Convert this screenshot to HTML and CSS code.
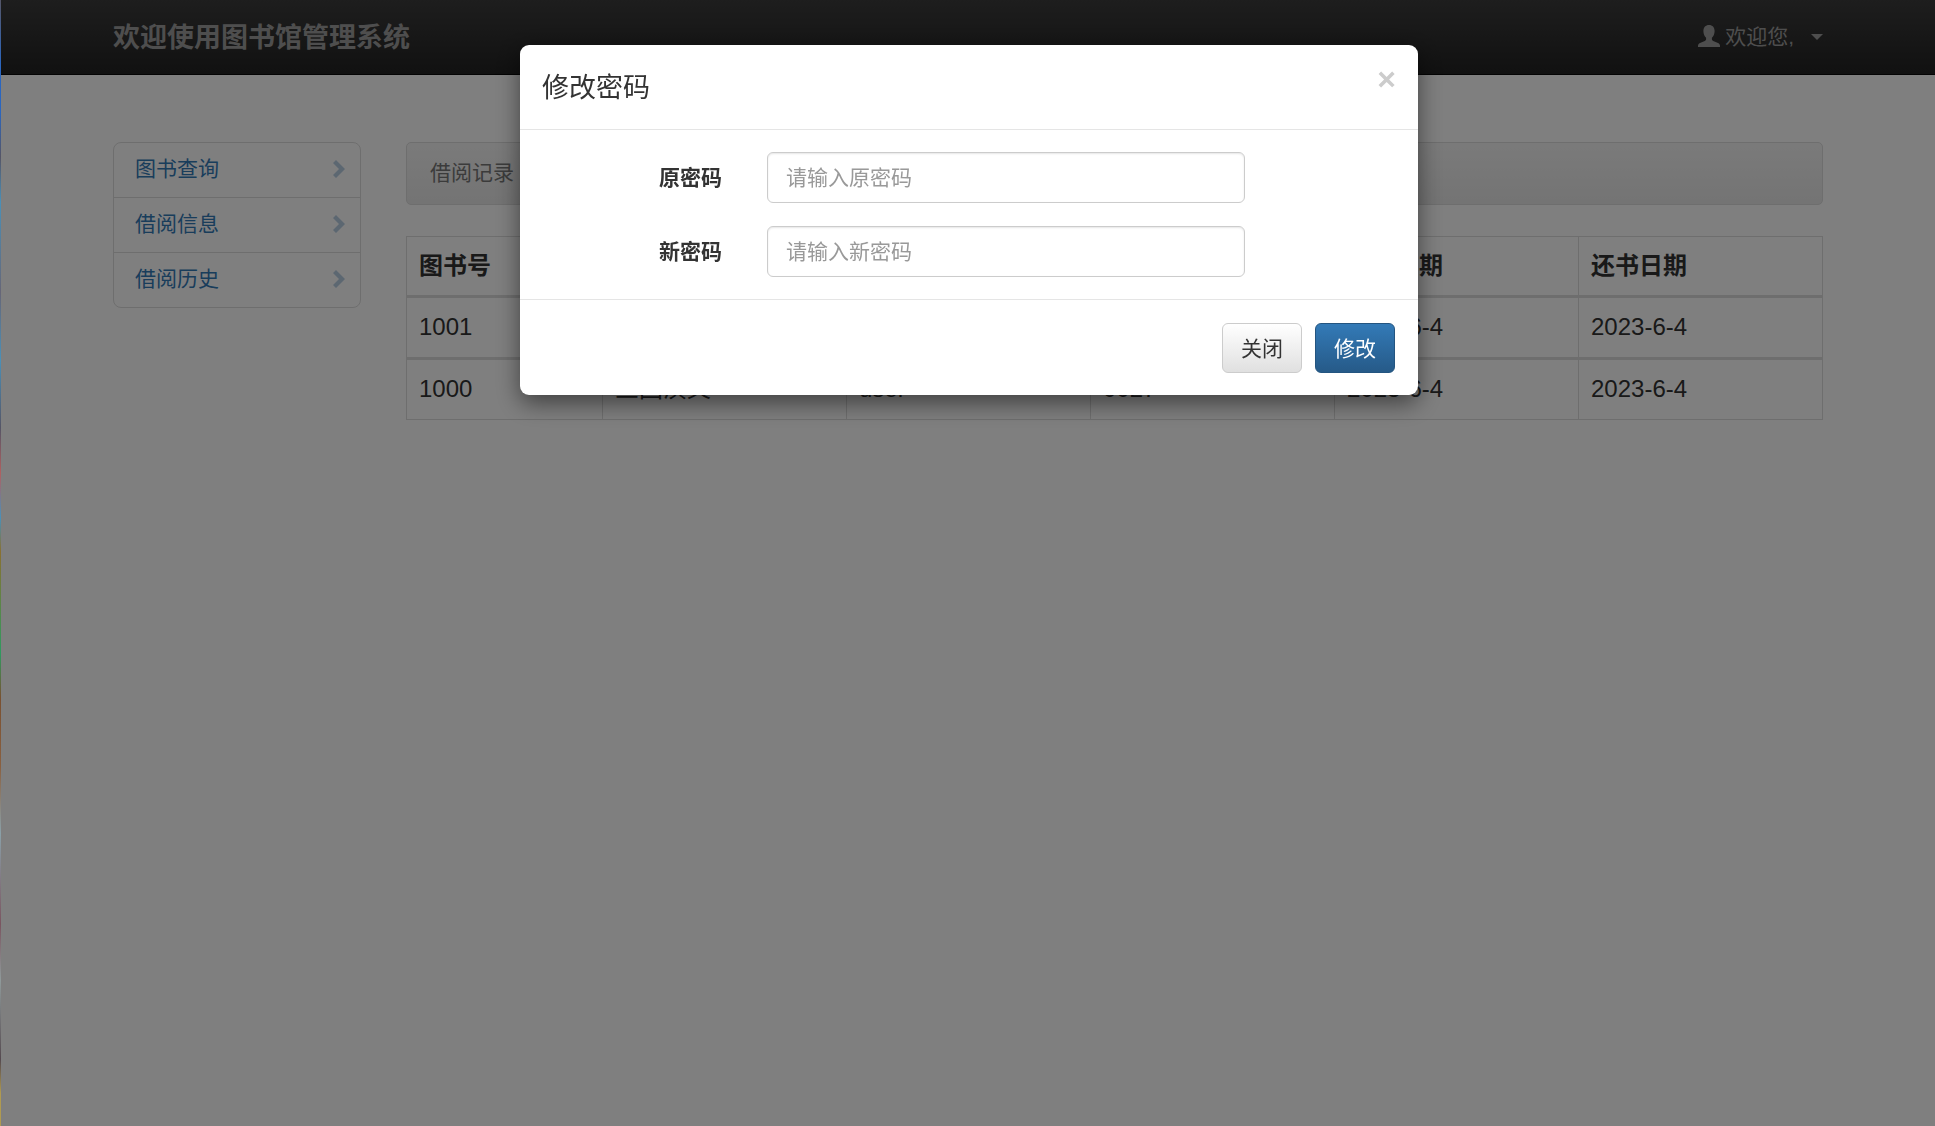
FILE: index.html
```html
<!DOCTYPE html>
<html lang="zh-CN">
<head>
  <meta charset="UTF-8">
  <meta name="viewport" content="width=device-width, initial-scale=1.0">
  <title>图书馆管理系统</title>
  <link rel="stylesheet" href="styles.css">
</head>
<body>

  <nav class="navbar">
    <div class="container navbar-inner">
      <a class="navbar-brand" href="#">欢迎使用图书馆管理系统</a>
      <a class="navbar-user" href="#">
        <svg class="icon-user" viewBox="0 0 22 22" aria-hidden="true"><path d="M11 0C7.600 0 5.400 2.300 5.400 6c0 3 1.100 5.300 2.700 6.700v1.600c0 .8-.5 1.200-1.300 1.600L2 18.100C.7 18.700 0 19.600 0 21v1h22v-1c0-1.400-.7-2.300-2-2.900l-4.800-2.200c-.8-.4-1.300-.8-1.300-1.600v-1.600C15.500 11.300 16.600 9 16.600 6c0-3.700-2.200-6-5.600-6z"/></svg>
        <span>欢迎您,</span>
        <span class="caret"></span>
      </a>
    </div>
  </nav>

  <div class="container main">
    <div class="list-group">
      <a class="list-group-item" href="#">图书查询
        <svg class="icon-chevron" viewBox="0 0 14 20" aria-hidden="true"><path d="M4 1l9 9-9 9-3-3 6-6-6-6z"/></svg>
      </a>
      <a class="list-group-item" href="#">借阅信息
        <svg class="icon-chevron" viewBox="0 0 14 20" aria-hidden="true"><path d="M4 1l9 9-9 9-3-3 6-6-6-6z"/></svg>
      </a>
      <a class="list-group-item" href="#">借阅历史
        <svg class="icon-chevron" viewBox="0 0 14 20" aria-hidden="true"><path d="M4 1l9 9-9 9-3-3 6-6-6-6z"/></svg>
      </a>
    </div>

    <div class="content">
      <div class="panel-heading">借阅记录</div>
      <table class="table">
        <thead>
          <tr>
            <th class="col-id">图书号</th>
            <th>图书名称</th>
            <th>用户名</th>
            <th>编号</th>
            <th>借书日期</th>
            <th>还书日期</th>
          </tr>
        </thead>
        <tbody>
          <tr>
            <td>1001</td>
            <td>西游记</td>
            <td>user</td>
            <td>0027</td>
            <td>2023-6-4</td>
            <td>2023-6-4</td>
          </tr>
        </tbody>
        <tbody>
          <tr>
            <td>1000</td>
            <td>三国演义</td>
            <td>user</td>
            <td>0027</td>
            <td>2023-6-4</td>
            <td>2023-6-4</td>
          </tr>
        </tbody>
      </table>
    </div>
  </div>

  <!-- 修改密码 -->
  <div class="modal-backdrop">
    <form class="modal" role="dialog" aria-labelledby="modalTitle">
      <div class="modal-header">
        <h4 class="modal-title" id="modalTitle">修改密码</h4>
        <button type="button" class="close" aria-label="关闭">&times;</button>
      </div>
      <div class="modal-body">
        <div class="form-group">
          <label for="oldPassword">原密码</label>
          <input type="password" id="oldPassword" placeholder="请输入原密码">
        </div>
        <div class="form-group">
          <label for="newPassword">新密码</label>
          <input type="password" id="newPassword" placeholder="请输入新密码">
        </div>
      </div>
      <div class="modal-footer">
        <button type="button" class="btn btn-default">关闭</button>
        <button type="submit" class="btn btn-primary">修改</button>
      </div>
    </form>
  </div>

</body>
</html>
```

FILE: styles.css
```css
* {
  box-sizing: border-box;
}

body {
  font-family: "Liberation Sans", "Noto Sans CJK SC", sans-serif;
  font-size: 21px;
  line-height: 30px;
  color: #333;
  background-color: #fff;
  margin: 0;
  min-height: 100vh;
  /* 左侧彩色细边 */
  border-left: 1px solid;
  border-image: linear-gradient(to bottom, #556 0%, #2a66c0 6%, #2a66c0 10%, #556 14%, #4a90b8 18%, #667 26%, #4a90b8 32%, #556 38%, #b06060 42%, #4a90b8 46%, #8a7030 49%, #2f9a60 58%, #7a5030 62%, #8a6040 68%, #8aa0a8 74%, #7a5560 82%, #8f9a9a 87%, #554a50 94%, #b09a50 97%, #b09a50 100%) 1;
}

a {
  text-decoration: none;
}

.container {
  width: 100%;
  max-width: 1754px;
  margin: 0 auto;
  padding: 0 22px;
}

/* 导航栏 */
.navbar {
  background: linear-gradient(to bottom, #3c3c3c 0%, #222 100%);
  border-bottom: 1px solid #080808;
}

.navbar-inner {
  display: flex;
  align-items: center;
  justify-content: space-between;
  height: 74px;
}

.navbar-brand {
  font-size: 27px;
  font-weight: bold;
  padding-top: 2px;
  color: #9d9d9d;
}

.navbar-user {
  display: flex;
  align-items: center;
  gap: 5px;
  color: #9d9d9d;
}

.icon-user {
  width: 22px;
  height: 22px;
  margin-bottom: 3px;
  fill: #9d9d9d;
}

.caret {
  margin-left: 12px;
  border-top: 6px solid #9d9d9d;
  border-left: 6px solid transparent;
  border-right: 6px solid transparent;
}

/* 主体 */
.main {
  display: flex;
  align-items: flex-start;
  gap: 45px;
  margin-top: 67px;
}

.list-group {
  width: 248px;
  flex-shrink: 0;
  border: 1px solid #ddd;
  border-radius: 8px;
}

.list-group-item {
  display: flex;
  align-items: center;
  justify-content: space-between;
  padding: 11px 14px 13px 21px;
  color: #337ab7;
}

.list-group-item + .list-group-item {
  border-top: 1px solid #ddd;
}

.icon-chevron {
  width: 14px;
  height: 20px;
  fill: #b8cfe3;
}

.content {
  flex: 1;
}

.panel-heading {
  padding: 15px 23px 16px;
  color: #777;
  background: linear-gradient(to bottom, #f5f5f5 0%, #e8e8e8 100%);
  border: 1px solid #dcdcdc;
  border-radius: 5px;
  margin-bottom: 31px;
}

.table {
  width: 100%;
  table-layout: fixed;
  border-collapse: collapse;
  font-size: 24px;
  line-height: 34px;
}

.table th,
.table td {
  padding: 12px 12px 13px;
  border: 1px solid #ddd;
  text-align: left;
}

.table th {
  padding: 12px;
}

.table .col-id {
  width: 196px;
}

.table tbody {
  border-top: 3px solid #ddd;
}

/* 弹窗 */
.modal-backdrop {
  position: fixed;
  inset: 0 0 0 1px;
  padding: 45px 0 0 2px;
  background-color: rgba(0, 0, 0, 0.5);
}

.modal {
  width: 100%;
  max-width: 898px;
  margin: 0 auto;
  background-color: #fff;
  border-radius: 9px;
  box-shadow: 0 8px 23px rgba(0, 0, 0, 0.5);
}

.modal-header {
  display: flex;
  align-items: flex-start;
  justify-content: space-between;
  padding: 22px 22px 21px;
  border-bottom: 1px solid #e5e5e5;
}

.modal-title {
  font-size: 27px;
  font-weight: normal;
  line-height: 40px;
  padding-top: 1px;
  margin: 0;
}

.close {
  font-family: inherit;
  font-size: 32px;
  font-weight: bold;
  line-height: 24px;
  padding: 0;
  border: none;
  background: none;
  color: #ccc;
  cursor: pointer;
}

.modal-body {
  display: flex;
  flex-direction: column;
  gap: 23px;
  padding: 22px;
}

.form-group {
  display: flex;
  align-items: center;
  gap: 45px;
}

.form-group label {
  width: 180px;
  text-align: right;
  font-weight: bold;
}

.form-group input {
  width: 478px;
  height: 51px;
  padding: 9px 18px;
  font-family: inherit;
  font-size: 21px;
  color: #555;
  border: 1px solid #ccc;
  border-radius: 6px;
  box-shadow: inset 0 1px 2px rgba(0, 0, 0, 0.1);
}

.form-group input::placeholder {
  color: #999;
}

.modal-footer {
  display: flex;
  justify-content: flex-end;
  gap: 13px;
  padding: 23px 23px 22px;
  border-top: 1px solid #e5e5e5;
}

.btn {
  width: 80px;
  height: 50px;
  padding: 0 0 3px;
  font-family: inherit;
  font-size: 21px;
  border-radius: 6px;
  cursor: pointer;
}

.btn-default {
  color: #333;
  background: linear-gradient(to bottom, #fff 0%, #e0e0e0 100%);
  border: 1px solid #ccc;
}

.btn-primary {
  color: #fff;
  background: linear-gradient(to bottom, #337ab7 0%, #265a88 100%);
  border: 1px solid #245580;
}
```
